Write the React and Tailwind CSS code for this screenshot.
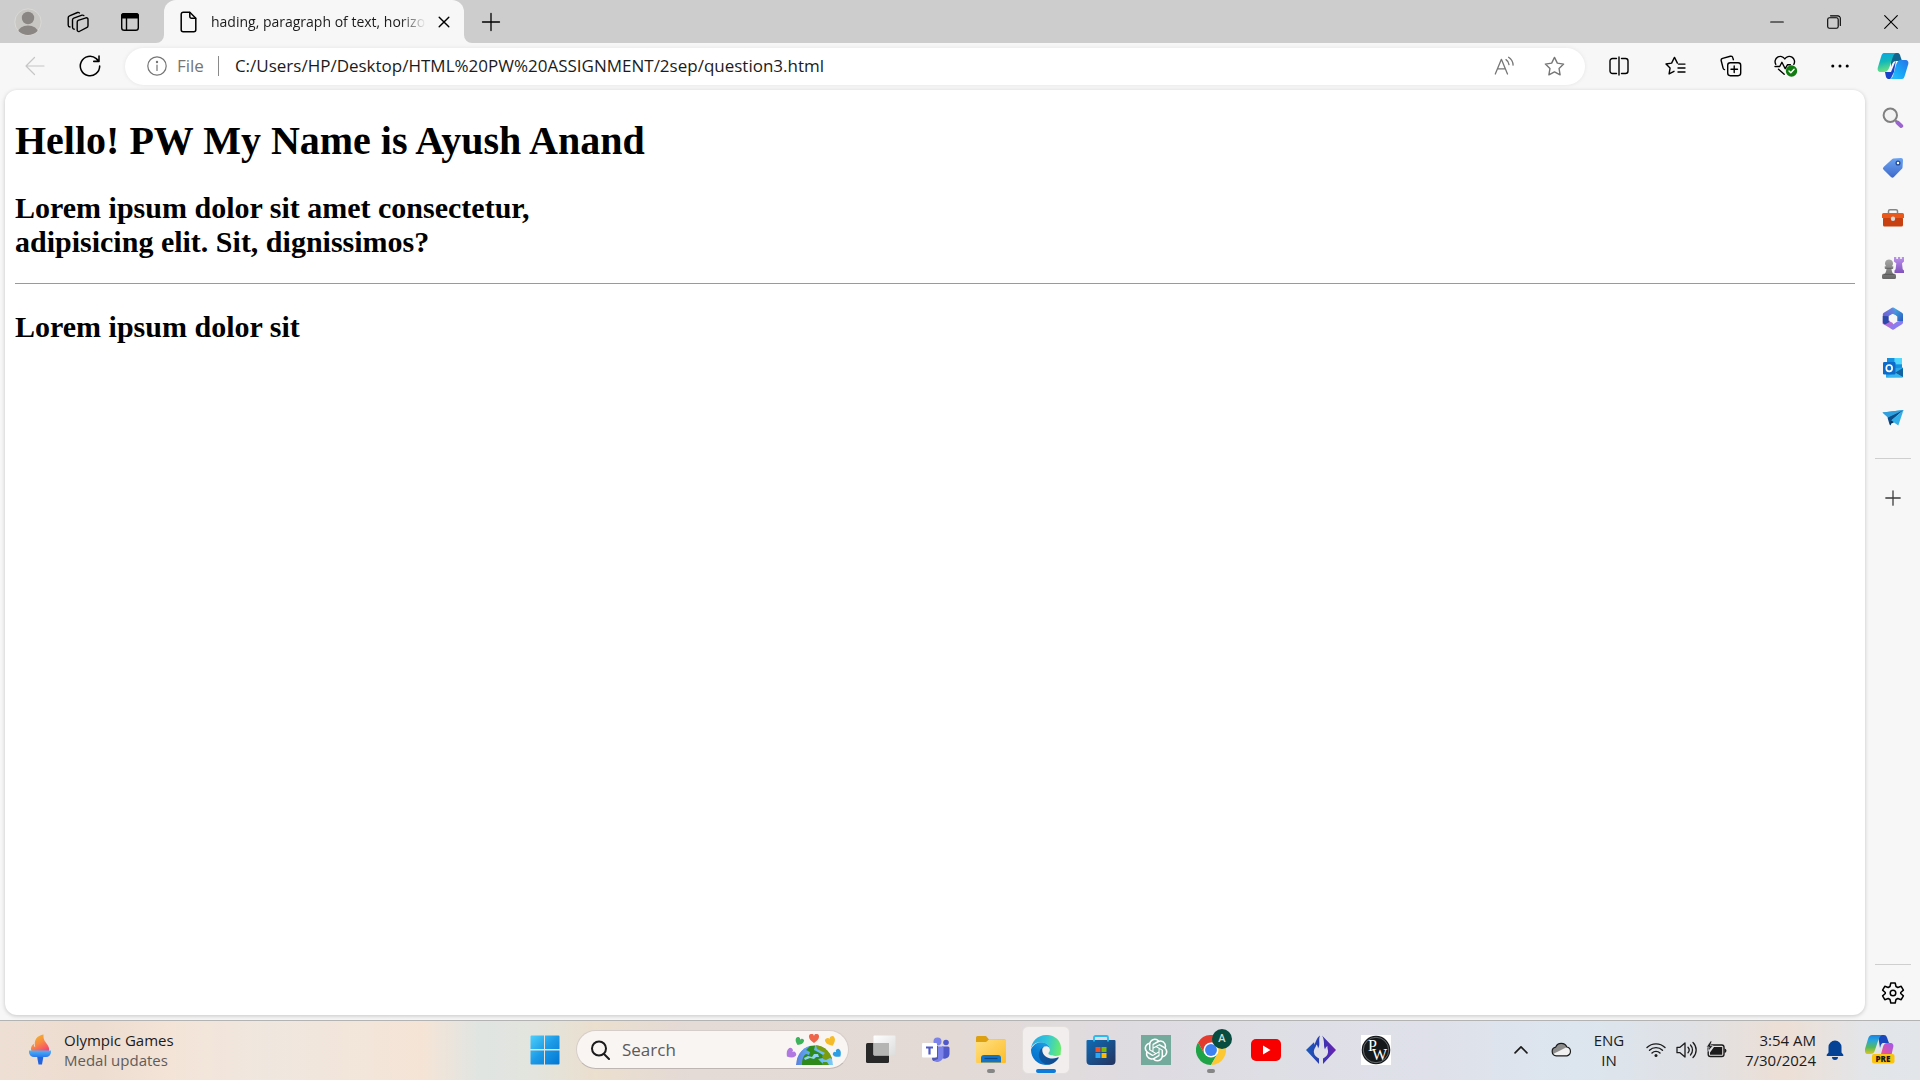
import React from 'react';

const line = { fill: 'none', stroke: 'currentColor', strokeLinecap: 'round', strokeLinejoin: 'round' };

function Icon({ size = 20, w = 1.3, className = '', children }) {
  return (
    <svg width={size} height={size} viewBox="0 0 20 20" {...line} strokeWidth={w} className={className} aria-hidden="true">
      {children}
    </svg>
  );
}

function IconButton({ label, className = '', children }) {
  return (
    <button type="button" aria-label={label} className={`flex shrink-0 items-center justify-center ${className}`}>
      {children}
    </button>
  );
}

/* ---------- Browser chrome icons ---------- */

const Avatar = () => (
  <svg width="28" height="28" viewBox="0 0 28 28" aria-hidden="true">
    <defs><clipPath id="av"><circle cx="14" cy="14" r="13" /></clipPath></defs>
    <circle cx="14" cy="14" r="13.2" fill="#c9c7c4" stroke="#dbd9d6" />
    <g clipPath="url(#av)" fill="#8a8683">
      <circle cx="14" cy="10" r="6.2" />
      <ellipse cx="14" cy="24.5" rx="10" ry="7" />
    </g>
  </svg>
);

const Workspaces = () => (
  <svg width="22" height="22" viewBox="0 0 22 22" {...line} strokeWidth="1.4" aria-hidden="true">
    <path d="M11.2 9.4 19 6.8a1.6 1.6 0 0 1 2 1.6v6.4a2 2 0 0 1-1.4 1.9l-7.4 3.8a1.5 1.5 0 0 1-2-1.5v-7.8a2 2 0 0 1 1-1.8Z" />
    <path d="M7.2 18.2a2 2 0 0 1-1.7-2V9a2 2 0 0 1 1.3-1.9l8.2-2.9a1.9 1.9 0 0 1 1.8.4" />
    <path d="M3 16a2 2 0 0 1-1.8-2V6.700a2 2 0 0 1 1.300-1.9L10.500 1.500a1.9 1.9 0 0 1 1.900.400" />
  </svg>
);

const TabActions = () => (
  <svg width="20" height="20" viewBox="0 0 20 20" aria-hidden="true">
    <rect x="1.700" y="1.700" width="16.600" height="16.600" rx="2.600" fill="none" stroke="#000" strokeWidth="1.400" />
    <path d="M1 6.500V4a3 3 0 0 1 3-3h12a3 3 0 0 1 3 3v2.500Z" fill="#000" />
    <path d="M6.500 6v12" stroke="#000" strokeWidth="1.400" />
  </svg>
);

const FileIcon = () => (
  <svg width="17" height="22" viewBox="0 0 17 22" {...line} strokeWidth="1.500" className="shrink-0" aria-hidden="true">
    <path d="M3.200 1.200h6.600l6 6v11.600a2 2 0 0 1-2 2H3.200a2 2 0 0 1-2-2V3.200a2 2 0 0 1 2-2Z" />
    <path d="M9.800 1.400v4.200a1.600 1.600 0 0 0 1.600 1.600h4.200" />
  </svg>
);

const ReadAloud = () => (
  <svg width="21" height="20" viewBox="0 0 21 20" {...line} strokeWidth="1.300" aria-hidden="true">
    <path d="M1.300 18 7.400 3.300 13.500 18M3.500 12.800h7.900M12 3.600c1.800 1.200 2.800 2.900 3 5M14.600 1.300c2.800 1.800 4.300 4.400 4.500 7.800" />
  </svg>
);

const starPath = 'M10 1.300l2.700 5.500 6 .900-4.350 4.250 1 6L10 15.100l-5.350 2.850 1-6L1.300 7.700l6-.900Z';

const Favorites = () => (
  <svg width="21" height="20" viewBox="0 0 21 20" {...line} strokeWidth="1.400" aria-hidden="true">
    <path d="m9 15.300-4.900 2.600.950-5.800L1 8l5.600-.850L9.500 1.400l2.900 5.700M13.500 8.100H20M13 12h7M13 16h7" />
  </svg>
);

const Collections = () => (
  <svg width="22" height="22" viewBox="0 0 22 22" {...line} strokeWidth="1.400" aria-hidden="true">
    <rect x="7.700" y="7.700" width="13" height="13" rx="2.600" />
    <path d="M14.200 11v6.500M11 14.200h6.500M4.500 14.600a2 2 0 0 1-1.400-1.500L1.200 5.800a2 2 0 0 1 1.400-2.400l7.700-2.100a2 2 0 0 1 2.500 1.400l.600 2" />
  </svg>
);

const Essentials = () => (
  <svg width="24" height="23" viewBox="0 0 24 23" {...line} strokeWidth="1.400" aria-hidden="true">
    <path d="M1.800 9.300A5 5 0 0 1 10.800 4a5 5 0 0 1 9 5.300M1 11.500h4.700l2.200-4.200 3.300 6.400 2.400-4h2.800M4.500 14.300l5.700 5" />
    <circle cx="17.500" cy="16" r="5.700" fill="#107c10" stroke="none" />
    <path d="m15 16 1.800 1.800 3.300-3.600" stroke="#fff" />
  </svg>
);

const Copilot = () => (
  <svg width="32" height="28" viewBox="0 0 32 28" aria-hidden="true">
    <defs>
      <linearGradient id="cpA" x1="0" y1="0" x2="0.200" y2="1"><stop stopColor="#0aa5e6" /><stop offset=".5" stopColor="#12b8b8" /><stop offset="1" stopColor="#6ae081" /></linearGradient>
      <linearGradient id="cpB" x1="1" y1="0" x2="0" y2="1"><stop stopColor="#2a72e8" /><stop offset=".5" stopColor="#18a2f5" /><stop offset="1" stopColor="#28c3fb" /></linearGradient>
    </defs>
    <path d="M14 1h6c3 0 3 2 4 5l1 3h-6c-3 0-4 3-5 6Z" fill="#12658f" />
    <path d="M8 20h6l5-12-2 12-2 4c-1 3-2 3-3 3-3 0-3-2-4-7Z" fill="#1742c9" />
    <path d="M7 1h12c-2 1-2.500 2-3.500 5l-3 9c-1.500 4-3 5-6 5H4c-3 0-4-2-3-5L4 5c1-3 1.500-4 3-4Z" fill="url(#cpA)" />
    <path d="M25 27H13c2-1 2.500-2 3.500-5l2.500-9c1.500-4 3-5 5-5h4c3 0 4 2 3 5l-3 10c-1 3-1.500 4-3 4Z" fill="url(#cpB)" />
  </svg>
);

/* ---------- Sidebar icons ---------- */

const SideSearch = () => (
  <svg width="22" height="22" viewBox="0 0 22 22" fill="none" aria-hidden="true">
    <path d="m13.500 13.500 2 2" stroke="#777" strokeWidth="2" />
    <circle cx="8.300" cy="8.300" r="6.700" fill="#f2f2f2" stroke="#808080" strokeWidth="2" />
    <path d="m15.500 15.500 3.700 3.500" stroke="#9a63cf" strokeWidth="4" strokeLinecap="round" />
  </svg>
);

const SideTag = () => (
  <svg width="22" height="22" viewBox="0 0 22 22" aria-hidden="true">
    <defs><linearGradient id="tg" x1="0" y1="0" x2="0" y2="1"><stop stopColor="#6aa4f2" /><stop offset="1" stopColor="#3f69cb" /></linearGradient></defs>
    <path d="M11.500 1.500 19 1a2 2 0 0 1 2 2l-.500 7.500a2 2 0 0 1-.6 1.300l-8 8.200a2 2 0 0 1-2.900 0l-7.400-7.200a2 2 0 0 1 0-2.900L10 2.200a2 2 0 0 1 1.500-.700Z" fill="url(#tg)" />
    <circle cx="16" cy="6" r="1.900" fill="#fff" stroke="#234a93" strokeWidth="1.300" />
  </svg>
);

const SideTools = () => (
  <svg width="22" height="20" viewBox="0 0 22 20" aria-hidden="true">
    <path d="M6.500 6V3.200a1.500 1.500 0 0 1 1.500-1.500h6a1.500 1.500 0 0 1 1.500 1.500V6" fill="none" stroke="#858585" strokeWidth="1.500" />
    <rect x="1" y="9" width="20" height="9.500" rx="1.500" fill="#c8400f" />
    <path d="M1.500 5h19a1.500 1.500 0 0 1 1.500 1.500V10H0V6.500A1.500 1.500 0 0 1 1.500 5Z" fill="#e8591b" />
    <circle cx="11" cy="10.700" r="2.200" fill="#d9d9d9" />
  </svg>
);

const SideGames = () => (
  <svg width="24" height="24" viewBox="0 0 24 24" aria-hidden="true">
    <defs>
      <linearGradient id="rk" x1="0" y1="0" x2="0" y2="1"><stop stopColor="#bd92ee" /><stop offset="1" stopColor="#8052bd" /></linearGradient>
      <linearGradient id="pn" x1="0" y1="0" x2="0" y2="1"><stop stopColor="#a6a6a6" /><stop offset="1" stopColor="#666" /></linearGradient>
    </defs>
    <path d="M13 1h2.300v2h1.600V1h2.300v2h1.600V1H23v4.500l-2 1.800.700 6 1.300 1.200V17h-9.500v-2.500l1.100-1.200.700-6L13 5.500Z" fill="url(#rk)" />
    <path d="M8 3.500a4 4 0 0 1 3 6.700h1.300v2.300h-1.800c.2 2.500.6 4 1.700 5.300h1.300a2 2 0 0 1 1.500 2.200v1.500a1.500 1.500 0 0 1-1.500 1.500h-11A1.500 1.500 0 0 1 1 21.500V20a2 2 0 0 1 1.500-2.200h1.300c1.100-1.300 1.500-2.800 1.700-5.300H3.700v-2.300H5a4 4 0 0 1 3-6.700Z" fill="url(#pn)" />
    <path d="M4 12.300h8M3 18.400h10" stroke="#555" strokeWidth=".8" />
  </svg>
);

const SideM365 = () => (
  <svg width="22" height="23" viewBox="0 0 22 23" aria-hidden="true">
    <defs>
      <linearGradient id="m1" x1="0" y1="1" x2="1" y2="0"><stop stopColor="#7651c9" /><stop offset="1" stopColor="#5f8fe6" /></linearGradient>
      <linearGradient id="m2" x1="0" y1="0" x2="1" y2="1"><stop stopColor="#49c7ee" /><stop offset="1" stopColor="#2b52be" /></linearGradient>
    </defs>
    <path d="M10 .8c.7-.3 1.300-.3 2 0l8 4.900a2 2 0 0 1 1 1.700v8.200L15.300 14V9.600L10 6.500 7 4Z" fill="url(#m2)" />
    <path d="m10 .8-8.200 5a2 2 0 0 0-1 1.800V15l5.700-1.500V9.300L13 5.500c0-2-.5-4-3-4.700Z" fill="url(#m1)" />
    <path d="M1 14.500 9 13l2 3.700 2.500 4.300-1.500 1.300a2 2 0 0 1-2 0l-8-4.800a2 2 0 0 1-1-3Z" fill="#b06fd8" />
    <path d="M21 14v1.600a2 2 0 0 1-1 1.700l-8 5c-2 .5-4-.8-4-2.800l7.300-5Z" fill="#8b7cf0" />
    <path d="M.8 14.500V9l5.700.3v4.200l1 1.500-4.500 2.500c-1.300-.5-2.200-1.500-2.200-3Z" fill="#2a49a8" />
    <circle cx="11" cy="11.500" r="4" fill="#f7f7f7" />
  </svg>
);

const SideOutlook = () => (
  <svg width="22" height="22" viewBox="0 0 22 22" aria-hidden="true">
    <rect x="5" y="1" width="15" height="14" rx="1" fill="#28a8ea" />
    <path d="M5 1h7.500v7H5ZM12.500 8H20v5h-7.500Z" fill="#1490df" />
    <path d="M12.500 1H20v6h-7.500Z" fill="#50d9ff" />
    <path d="M4 20.500V12l17-1.500v9a1 1 0 0 1-1 1Z" fill="#28a8ea" />
    <path d="m21 11-8 4.700 8 4.300Z" fill="#14629f" />
    <path d="m4 20.500 17-.300-8-4.700Z" fill="#38b7ee" />
    <rect x="1" y="5" width="12.500" height="12.500" rx="1.200" fill="#0b6ccb" />
    <ellipse cx="7.200" cy="11.200" rx="2.900" ry="3.200" fill="none" stroke="#fff" strokeWidth="1.700" />
  </svg>
);

const SideDrop = () => (
  <svg width="22" height="18" viewBox="0 0 22 18" aria-hidden="true">
    <path d="M.5 3.500 21.500 1 9 10.500Z" fill="#1ca0e0" />
    <path d="M5.500 8.500 21.500 1 9 12v4.500l-1.500-1Z" fill="#0d4c86" />
    <path d="M9.200 11.500 21.500 1l-5.200 15.500Z" fill="#31afe9" />
    <path d="m8 15.300 1.200-4 2.800 2Z" fill="#062e59" />
    <path d="M.5 3.500 21.500 1 5.800 8.500Z" fill="#2f9fdd" />
  </svg>
);

const Gear = () => (
  <svg width="24" height="24" viewBox="0 0 24 24" {...line} strokeWidth="1.500" aria-hidden="true">
    <circle cx="12" cy="12" r="2.800" />
    <path d="M9.800 2h4.400l.8 3.500 1.800 1 3.400-1.200 2.200 3.800-2.700 2.400v1l2.700 2.400-2.200 3.800-3.400-1.200-1.800 1-.8 3.500H9.800L9 18.500l-1.800-1-3.400 1.200-2.200-3.800 2.700-2.400v-1L1.600 9.100l2.200-3.800 3.400 1.200 1.800-1Z" />
  </svg>
);

/* ---------- Taskbar icons ---------- */

const Torch = () => (
  <svg width="22" height="31" viewBox="0 0 22 31" aria-hidden="true">
    <defs>
      <linearGradient id="fl" x1=".2" y1="0" x2=".8" y2="1"><stop stopColor="#f1b825" /><stop offset=".5" stopColor="#f88945" /><stop offset="1" stopColor="#f54273" /></linearGradient>
      <linearGradient id="bw" x1="0" y1="0" x2="0" y2="1"><stop stopColor="#50b4f8" /><stop offset="1" stopColor="#2878ed" /></linearGradient>
    </defs>
    <path d="M14.500.5c-.2 4 .5 5.500 3 9s3 5 2.500 7.500H2.500C1 14 3 11 5 9.800c-.5 2 .2 3 1.200 3.200C4.500 6 8 1.500 14.500.5Z" fill="url(#fl)" />
    <path d="M8 22h6.500L13 30.500H9.500Z" fill="#2363de" />
    <path d="M0 16.500h22v1.800a5 5 0 0 1-5 4.700H5a5 5 0 0 1-5-4.700Z" fill="url(#bw)" />
  </svg>
);

const Start = () => (
  <svg width="30" height="30" viewBox="0 0 30 30" aria-hidden="true">
    <defs><linearGradient id="wn" x1="0" y1="0" x2="30" y2="30" gradientUnits="userSpaceOnUse"><stop stopColor="#4ed1fc" /><stop offset=".5" stopColor="#1c99e6" /><stop offset="1" stopColor="#0075d2" /></linearGradient></defs>
    <path d="M1.500.5H14V14H.5V1.500a1 1 0 0 1 1-1ZM15 .5h13.500a1 1 0 0 1 1 1V14H15ZM.5 15.500H14v14H1.500a1 1 0 0 1-1-1ZM15 15.500h14.500v13a1 1 0 0 1-1 1H15Z" fill="url(#wn)" />
  </svg>
);

const Heart = ({ x, y, r, fill }) => (
  <path transform={`translate(${x} ${y}) rotate(${r})`} d="M0 4C-3.500 1.800-5-.2-5-2.200A2.500 2.500 0 0 1 0-3a2.500 2.500 0 0 1 5 .800C5-.2 3.500 1.800 0 4Z" fill={fill} />
);

const SmallHeart = ({ x, y, r, fill }) => (
  <path transform={`translate(${x} ${y}) rotate(${r}) scale(.85)`} d="M0 4C-3.500 1.800-5-.2-5-2.200A2.500 2.500 0 0 1 0-3a2.500 2.500 0 0 1 5 .800C5-.2 3.500 1.800 0 4Z" fill={fill} />
);

const Globe = () => (
  <svg width="58" height="32" viewBox="0 0 58 32" aria-hidden="true">
    <defs>
      <clipPath id="gb"><path d="M11 31a18.500 20 0 0 1 37 0Z" /></clipPath>
      <linearGradient id="oc"><stop stopColor="#5b7fdc" /><stop offset=".4" stopColor="#61b3f7" /><stop offset="1" stopColor="#78c9f6" /></linearGradient>
    </defs>
    <g clipPath="url(#gb)">
      <path d="M11 31a18.500 20 0 0 1 37 0Z" fill="url(#oc)" />
      <path d="M17 31c0-5 1-9 4-11l3 1 1-3-4-2 4-4 5 0-1 4 4 2 5 3 0 3-5 1 3 3 3 3H17Z" fill="#2f8a1c" />
      <path d="M31 11h9l9 9 0 6-4-2-4 2-3-1-1-3 3-3-4-2-4-2Z" fill="#7a9c0d" />
      <path d="M37 31l1-3 4 0 2 3Z" fill="#4c951a" />
      <path d="M19 24l4-2 4 1 2-3 4 0 1 3-3 0-2 2-4-1-5 2Z" fill="#8fd2f5" />
    </g>
    <Heart x="29" y="5" r="0" fill="#ee654a" />
    <SmallHeart x="14" y="8" r="25" fill="#3fb25c" />
    <Heart x="46" y="8" r="-25" fill="#f5bb28" />
    <Heart x="5" y="20" r="50" fill="#b078e0" />
    <SmallHeart x="53" y="20" r="-45" fill="#2b9ee4" />
  </svg>
);

const TaskView = () => (
  <svg width="30" height="29" viewBox="0 0 30 29" aria-hidden="true">
    <defs><linearGradient id="tv" x1="0" y1="0" x2="1" y2="1"><stop stopColor="#fff" /><stop offset="1" stopColor="#dcdcdc" /></linearGradient></defs>
    <rect x="0" y="8" width="23" height="20" rx="1.500" fill="#282828" />
    <rect x="7.500" y=".5" width="22" height="20" rx="1" fill="url(#tv)" />
    <path d="M7.500 8H23v12.500H8.500a1 1 0 0 1-1-1Z" fill="#b5b5b3" />
  </svg>
);

const Teams = () => (
  <svg width="28" height="26" viewBox="0 0 28 26" aria-hidden="true">
    <circle cx="15.500" cy="4.500" r="4" fill="#7b83eb" />
    <circle cx="24" cy="5.500" r="2.800" fill="#5059c9" />
    <path d="M20 9.500h6a1.500 1.500 0 0 1 1.500 1.500v6a5 5 0 0 1-7.500 4Z" fill="#5059c9" />
    <path d="M11 9.500h10.500v8.500a6.500 6.500 0 0 1-11.500 4.500Z" fill="#7b83eb" />
    <path d="M13 9v12H10l1 3 5-2V9Z" fill="#5158ae" />
    <rect x="0" y="6" width="15" height="14.500" rx="1" fill="#fff" />
    <path d="M4 9.500h7v2H8.600V17.500H6.400v-6H4Z" fill="#5059c9" />
  </svg>
);

const Explorer = () => (
  <svg width="30" height="27" viewBox="0 0 30 27" aria-hidden="true">
    <defs><linearGradient id="fd" x1="0" y1="0" x2="1" y2="1"><stop stopColor="#ffe083" /><stop offset="1" stopColor="#fdbd27" /></linearGradient></defs>
    <path d="M0 7V1.500A1.500 1.500 0 0 1 1.500 0H10l3 3.500h15.500A1.500 1.500 0 0 1 30 5v5H0Z" fill="#dda010" />
    <path d="M0 6h10l3-2.500h16a1 1 0 0 1 1 1v21.500a1 1 0 0 1-1 1H1a1 1 0 0 1-1-1Z" fill="url(#fd)" />
    <path d="M5 26.500V22a3 3 0 0 1 3-3h14a3 3 0 0 1 3 3v4.500Z" fill="#1274c8" />
    <path d="M8.500 22.500h13" stroke="#08498b" strokeWidth="1.200" />
  </svg>
);

const Edge = () => (
  <svg width="30" height="30" viewBox="0 0 256 256" aria-hidden="true">
    <defs>
      <linearGradient id="e1" x1="63" y1="178" x2="241" y2="178" gradientUnits="userSpaceOnUse"><stop stopColor="#0c59a4" /><stop offset="1" stopColor="#114a8b" /></linearGradient>
      <linearGradient id="e2" x1="150" y1="90" x2="50" y2="240" gradientUnits="userSpaceOnUse"><stop stopColor="#1b9de2" /><stop offset=".5" stopColor="#0b80d6" /><stop offset="1" stopColor="#0570cc" /></linearGradient>
      <linearGradient id="e3" x1="0" y1="60" x2="250" y2="110" gradientUnits="userSpaceOnUse"><stop stopColor="#27a7e0" /><stop offset=".5" stopColor="#31c6da" /><stop offset="1" stopColor="#66eb6e" /></linearGradient>
    </defs>
    <path fill="url(#e1)" d="M231 190c-3 2-7 3-10 5a101 101 0 0 1-36 6c-47 0-89-32-89-74 0-11 7-22 17-28-43 2-54 47-54 73 0 74 69 82 83 82 8 0 20-2 27-5h1a128 128 0 0 0 66-53c2-4-2-8-5-6Z" />
    <path fill="url(#e2)" d="M106 241a79 79 0 0 1-23-21 81 81 0 0 1 29-121c4-2 10-4 17-4a36 36 0 0 1 34 29C160 57 80 52 44 73 15 90 0 120 0 127c-1 66 52 129 128 129 9 0 17-1 24-3-17 0-33-4-46-12Z" />
    <path fill="url(#e3)" d="M152 149c-1 1-3 4-3 8 0 4 2 7 6 10 19 14 56 12 57 12 14 0 28-4 41-11 0-23 3-39 3-52 1-31-11-52-16-61C217 16 173 0 128 0 58 0 1 56 0 126c0-36 36-65 80-65 4 0 24 0 43 10 16 8 25 19 31 29 6 11 7 24 7 30 0 5-3 13-9 19Z" />
  </svg>
);

const Store = () => (
  <svg width="30" height="30" viewBox="0 0 30 30" aria-hidden="true">
    <defs><linearGradient id="st" x1="0" y1="0" x2="1" y2="1"><stop stopColor="#0f6cb5" /><stop offset="1" stopColor="#24335e" /></linearGradient></defs>
    <path d="M1.500 5h27a1 1 0 0 1 1 1v20a4 4 0 0 1-4 4h-21a4 4 0 0 1-4-4V6a1 1 0 0 1 1-1Z" fill="url(#st)" />
    <path d="M8 6.500V2.500A1.500 1.500 0 0 1 9.500 1h11A1.500 1.500 0 0 1 22 2.500v4" fill="none" stroke="#2abaf0" strokeWidth="1.800" />
    <path d="M9.500 12h5v5h-5Z" fill="#f25022" /><path d="M15.500 12h5v5h-5Z" fill="#7fba00" /><path d="M9.500 18h5v5h-5Z" fill="#29a9f5" /><path d="M15.500 18h5v5h-5Z" fill="#ffb900" />
  </svg>
);

const Gpt = () => (
  <svg width="30" height="30" viewBox="0 0 30 30" aria-hidden="true">
    <path d="M0 0h30v30H0Z" fill="#74aa9c" />
    <g transform="translate(3.500 3.500) scale(.96)" fill="#fff">
      <path d="M22.282 9.821a5.985 5.985 0 0 0-.516-4.910 6.046 6.046 0 0 0-6.510-2.900A6.065 6.065 0 0 0 4.981 4.180a5.985 5.985 0 0 0-3.998 2.900 6.046 6.046 0 0 0 .743 7.097 5.980 5.980 0 0 0 .510 4.911 6.051 6.051 0 0 0 6.515 2.900A5.985 5.985 0 0 0 13.260 24a6.056 6.056 0 0 0 5.772-4.206 5.990 5.990 0 0 0 3.997-2.900 6.056 6.056 0 0 0-.747-7.073zM13.260 22.430a4.476 4.476 0 0 1-2.876-1.040l.141-.081 4.779-2.758a.795.795 0 0 0 .392-.681v-6.737l2.020 1.168a.071.071 0 0 1 .038.052v5.583a4.504 4.504 0 0 1-4.494 4.494zM3.600 18.304a4.470 4.470 0 0 1-.535-3.014l.142.085 4.783 2.759a.771.771 0 0 0 .780 0l5.843-3.369v2.332a.080.080 0 0 1-.033.062L9.740 19.950a4.500 4.500 0 0 1-6.140-1.646zM2.340 7.896a4.485 4.485 0 0 1 2.366-1.973V11.600a.766.766 0 0 0 .388.676l5.815 3.355-2.020 1.168a.076.076 0 0 1-.071 0l-4.830-2.786A4.504 4.504 0 0 1 2.340 7.872zm16.597 3.855l-5.833-3.387L15.119 7.200a.076.076 0 0 1 .071 0l4.830 2.791a4.494 4.494 0 0 1-.676 8.105v-5.678a.790.790 0 0 0-.407-.667zm2.010-3.023l-.141-.085-4.774-2.782a.776.776 0 0 0-.785 0L9.409 9.230V6.897a.066.066 0 0 1 .028-.061l4.830-2.787a4.500 4.500 0 0 1 6.680 4.660zm-12.640 4.135l-2.020-1.164a.080.080 0 0 1-.038-.057V6.075a4.500 4.500 0 0 1 7.375-3.453l-.142.080L8.704 5.460a.795.795 0 0 0-.393.681zm1.097-2.365l2.602-1.500 2.607 1.500v2.999l-2.597 1.500-2.607-1.500z" />
    </g>
  </svg>
);

const Chrome = () => (
  <svg width="30" height="30" viewBox="0 0 48 48" aria-hidden="true">
    <path d="M3.200 12a24 24 0 0 0 20.800 36l10.400-18L24 24l-10.400 6Z" fill="#1ea446" />
    <path d="M44.800 12A24 24 0 0 1 24 48l10.400-18L34.400 18 24 12Z" fill="#fcc934" />
    <path d="M3.200 12h.1L13.600 30 24 12h20.800A24 24 0 0 0 3.200 12Z" fill="#e33b2e" />
    <circle cx="24" cy="24" r="12" fill="#fff" />
    <circle cx="24" cy="24" r="9.500" fill="#3e82f1" />
  </svg>
);

const YouTube = () => (
  <svg width="30" height="22" viewBox="0 0 30 22" aria-hidden="true">
    <rect width="30" height="22" rx="5" fill="#f80000" />
    <path d="m12 6.500 7.500 4.500-7.500 4.500Z" fill="#fff" />
  </svg>
);

const CodeFlame = () => (
  <svg width="30" height="30" viewBox="0 0 30 30" aria-hidden="true">
    <defs><linearGradient id="cf" x1="0" y1="0" x2="30" y2="0" gradientUnits="userSpaceOnUse"><stop stopColor="#1a5cba" /><stop offset=".45" stopColor="#2b3cb0" /><stop offset="1" stopColor="#6d20b3" /></linearGradient></defs>
    <path d="M14 .5c-.6 1.500-.8 3-.8 4.500 0 3.500.8 5-1.200 8.500 0-2-.6-3-1.500-4-.6 3-3 4.500-2.600 8 .4 3.200 3 5 5.100 6v5.500L0 15l8-7.800c.3 1 .3 1.800.2 2.800C10 7 10.500 3 14 .5Z" fill="url(#cf)" />
    <path d="M16 .5 30 15 17 29v-5.500c2.200-1 4.600-2.800 5-6 .3-2.500-.8-4-.6-6.500-1.400 1-2 2-2.400 3.500C17.500 11.500 18.300 9 17.800 6c-.3-2-.8-4-1.800-5.500Z" fill="url(#cf)" />
  </svg>
);

const Pw = () => (
  <svg width="30" height="30" viewBox="0 0 30 30" aria-hidden="true">
    <path d="M0 0h30v30H0Z" fill="#fff" />
    <circle cx="15" cy="15" r="14.300" fill="#15191c" />
    <circle cx="15" cy="15" r="12.700" fill="none" stroke="#8a8d8f" strokeWidth=".7" />
    <text x="7" y="16" fontFamily="Liberation Serif, serif" fontSize="16" fill="#fff">P<tspan x="11" y="25">W</tspan></text>
  </svg>
);

const Cloud = () => (
  <svg width="21" height="15" viewBox="0 0 21 15" aria-hidden="true">
    <path d="M5.300 13.800a4.400 4.400 0 0 1-.600-8.700A6 6 0 0 1 15.800 5a4.500 4.500 0 0 1 .200 8.800Z" fill="#f1f1f1" />
    <path d="M2 12 13 6.500l3-1.500A6 6 0 0 0 4.700 5.100 4.400 4.400 0 0 0 2 12Z" fill="#8c8c8c" />
    <path d="M5.300 13.800a4.400 4.400 0 0 1-.600-8.700A6 6 0 0 1 15.800 5a4.500 4.500 0 0 1 .200 8.800Z" fill="none" stroke="#1b1b1b" strokeWidth="1.200" />
  </svg>
);

const Wifi = () => (
  <svg width="20" height="16" viewBox="0 0 20 16" {...line} strokeWidth="1.400" aria-hidden="true">
    <path d="M1 5.500a13 13 0 0 1 18 0M3.500 8.300a9.300 9.300 0 0 1 13 0M6 11a5.800 5.800 0 0 1 8 0" />
    <circle cx="10" cy="13.500" r="1.500" fill="currentColor" stroke="none" />
  </svg>
);

const Speaker = () => (
  <svg width="21" height="18" viewBox="0 0 21 18" {...line} strokeWidth="1.300" aria-hidden="true">
    <path d="M1 6.300h3L9 2v14l-5-4.300H1ZM12 6.300a4 4 0 0 1 0 5.400M14.500 4a7.300 7.300 0 0 1 0 10M17 1.500a10.500 10.500 0 0 1 0 15" />
  </svg>
);

const Battery = () => (
  <svg width="21" height="17" viewBox="0 0 21 17" aria-hidden="true">
    <rect x="2.200" y="4" width="15.800" height="11.500" rx="2.200" fill="none" stroke="#1b1b1b" strokeWidth="1.400" />
    <path d="M18.500 7.500v4.500a2.300 2.300 0 0 0 2-2.200 2.300 2.300 0 0 0-2-2.300ZM8 6h8.200v7.700H4V11.500Z" fill="#1b1b1b" />
    <path d="M4.500 0 .5 6h2.700L2 10.500 7 4.700H4.300L6 0Z" fill="#1b1b1b" stroke="#e6e9ec" strokeWidth=".6" />
  </svg>
);

const Bell = () => (
  <svg width="18" height="20" viewBox="0 0 18 20" fill="#054296" aria-hidden="true">
    <path d="M9 .5a6.500 6.500 0 0 1 6.500 6.500v5.500l1.800 2.200a.8.800 0 0 1-.6 1.300H1.300a.8.800 0 0 1-.6-1.300l1.800-2.200V7A6.500 6.500 0 0 1 9 .5ZM6 17h6a3 3 0 0 1-6 0Z" />
  </svg>
);

const CopilotPre = () => (
  <svg width="30" height="29" viewBox="0 0 30 29" aria-hidden="true">
    <defs>
      <linearGradient id="pa" x1="0" y1="0" x2="0" y2="1"><stop stopColor="#1684e5" /><stop offset=".3" stopColor="#2aa6d9" /><stop offset=".65" stopColor="#55b95c" /><stop offset="1" stopColor="#e0c51e" /></linearGradient>
      <linearGradient id="pb" x1="1" y1="0" x2="0" y2="1"><stop stopColor="#9b5bf0" /><stop offset=".5" stopColor="#e052a9" /><stop offset="1" stopColor="#fb7b5d" /></linearGradient>
    </defs>
    <path d="M13 0h6c3 0 3 3 5 8h-5c-3 0-3 2-4 5Z" fill="#1948bd" />
    <path d="M7 0h10c-2 1-3 3-4 6l-3 9c-1 3-2 4-5 4H3c-3 0-3-2-3-5L3 4c1-3 2-4 4-4Z" fill="url(#pa)" />
    <path d="M25 26H12c2-1 3-3 4-7l2-7c1-3 2-4 4-4h3c3 0 4 2 3 5l-2 9Z" fill="url(#pb)" />
    <rect x="7" y="19" width="22.500" height="9.500" rx="2" fill="#fbc40f" />
    <text x="18" y="26.500" textAnchor="middle" fontFamily="Open Sans, sans-serif" fontWeight="800" fontSize="8" fill="#1a1a1a">PRE</text>
  </svg>
);

/* ---------- Layout ---------- */

function TitleBar() {
  return (
    <header className="flex h-[43px] shrink-0 bg-[#cdcdcd]">
      <IconButton label="Profile" className="ml-2 w-10"><Avatar /></IconButton>
      <IconButton label="Workspaces" className="ml-2 w-11"><Workspaces /></IconButton>
      <IconButton label="Tab actions" className="ml-2 w-11"><TabActions /></IconButton>
      <div className="relative ml-3 flex w-[300px] items-center rounded-t-xl bg-[#f7f7f7] pl-4 pr-2.5">
        <svg className="absolute -left-2 bottom-0" width="8" height="8" aria-hidden="true"><path d="M8 0v8H0a8 8 0 0 0 8-8Z" fill="#f7f7f7" /></svg>
        <svg className="absolute -right-2 bottom-0" width="8" height="8" aria-hidden="true"><path d="M0 0v8h8a8 8 0 0 1-8-8Z" fill="#f7f7f7" /></svg>
        <FileIcon />
        <span className="ml-3.5 flex-1 overflow-hidden whitespace-nowrap text-sm text-[#1b1b1b] [mask-image:linear-gradient(to_right,black_88%,transparent)]">
          hading, paragraph of text, horizo
        </span>
        <IconButton label="Close tab" className="ml-2 size-5"><Icon size={16} w={1.8}><path d="m4 4 12 12M16 4 4 16" /></Icon></IconButton>
      </div>
      <IconButton label="New tab" className="ml-2 w-[38px]"><Icon size={20} w={1.3}><path d="M10 1.500v17M1.500 10h17" /></Icon></IconButton>
      <div className="ml-auto flex">
        <IconButton label="Minimize" className="w-[57px]"><Icon size={14} w={1.6}><path d="M1 10h18" /></Icon></IconButton>
        <IconButton label="Restore" className="w-[57px]"><Icon size={14} w={1.6}><rect x="1" y="4" width="15" height="15" rx="2.500" /><path d="M5 1.200h10.500A3.500 3.500 0 0 1 19 4.700V15" /></Icon></IconButton>
        <IconButton label="Close" className="w-[58px]"><Icon size={14} w={1.6}><path d="m1 1 18 18M19 1 1 19" /></Icon></IconButton>
      </div>
    </header>
  );
}

function Toolbar() {
  return (
    <div className="flex h-[46px] shrink-0 items-center">
      <IconButton label="Back" className="ml-3 w-[46px] text-[#c6c6c6]"><Icon w={1.2}><path d="M19 10H1.200M9.500 1.500 1 10l8.500 8.500" /></Icon></IconButton>
      <IconButton label="Refresh" className="ml-2 w-12"><Icon size={22} w={1.4}><path d="M18.800 10A8.800 8.800 0 1 1 15.700 3.300L18 5.600M18.200 1v4.800h-4.800" /></Icon></IconButton>
      <div className="ml-[11px] flex h-[37px] flex-1 items-center rounded-full bg-white pl-[22px] shadow-[0_0_4px_rgba(0,0,0,0.08)]">
        <button type="button" className="flex items-center gap-2.5 text-[17px] text-[#757575]">
          <Icon size={20} w={1.2}><circle cx="10" cy="10" r="9.200" /><path d="M10 9v5.500" /><circle cx="10" cy="6" r=".6" fill="currentColor" /></Icon>
          File
        </button>
        <span className="ml-3.5 h-5 w-px bg-[#8a8a8a]" />
        <input aria-label="Address" className="ml-4 min-w-0 flex-1 bg-transparent text-[17px] text-[#1b1b1b] outline-none" defaultValue="C:/Users/HP/Desktop/HTML%20PW%20ASSIGNMENT/2sep/question3.html" />
        <IconButton label="Read aloud" className="w-[50px] text-[#767676]"><ReadAloud /></IconButton>
        <IconButton label="Add to favorites" className="mr-1.5 w-[50px] text-[#767676]"><Icon size={21} w={1.3}><path d={starPath} /></Icon></IconButton>
      </div>
      <div className="ml-1.5 flex">
        <IconButton label="Split screen" className="w-14"><Icon size={20} w={1.4}><path d="M7.500 17.500h-4a2.500 2.500 0 0 1-2.500-2.500V5a2.500 2.500 0 0 1 2.500-2.500h4M12.500 2.500h4A2.500 2.500 0 0 1 19 5v10a2.500 2.500 0 0 1-2.500 2.500h-4M10 1v18" /></Icon></IconButton>
        <IconButton label="Favorites" className="w-14"><Favorites /></IconButton>
        <IconButton label="Collections" className="w-[55px]"><Collections /></IconButton>
        <IconButton label="Browser essentials" className="w-14"><Essentials /></IconButton>
        <IconButton label="Settings and more" className="w-[51px]"><Icon size={18} w={0}><g fill="#000"><circle cx="2" cy="10" r="1.700" /><circle cx="10" cy="10" r="1.700" /><circle cx="18" cy="10" r="1.700" /></g></Icon></IconButton>
      </div>
    </div>
  );
}

const sideItems = [
  ['Search', SideSearch], ['Shopping', SideTag], ['Tools', SideTools], ['Games', SideGames],
  ['Microsoft 365', SideM365], ['Outlook', SideOutlook], ['Drop', SideDrop],
];

function Sidebar() {
  return (
    <aside className="flex w-[55px] shrink-0 flex-col items-center">
      <IconButton label="Copilot" className="h-[46px] w-full"><Copilot /></IconButton>
      <nav className="mt-1 flex w-full flex-col">
        {sideItems.map(([name, Glyph]) => (
          <IconButton key={name} label={name} className="h-[50px] w-full"><Glyph /></IconButton>
        ))}
      </nav>
      <hr className="mt-[15px] w-9 border-[#cfcfcf]" />
      <IconButton label="Customize" className="mt-[15px] h-12 w-full text-[#3a3a3a]"><Icon size={16} w={1.6}><path d="M10 1v18M1 10h18" /></Icon></IconButton>
      <hr className="mt-auto w-9 border-[#cfcfcf]" />
      <IconButton label="Settings" className="h-[55px] w-full"><Gear /></IconButton>
    </aside>
  );
}

function Document() {
  return (
    <main className="mb-[5px] ml-[5px] mt-px flex-1 rounded-xl bg-white px-2.5 font-['Liberation_Serif',serif] text-black shadow-[0_1px_4px_rgba(0,0,0,0.2)]">
      <h1 className="mt-7 text-[40px] font-bold leading-[45px]">Hello! PW My Name is Ayush Anand</h1>
      <h2 className="mt-7 text-3xl/[34px] font-bold">
        Lorem ipsum dolor sit amet consectetur,
        <br />
        adipisicing elit. Sit, dignissimos?
      </h2>
      <hr className="mt-6 border-[#9a9a9a]" />
      <h2 className="mt-[26px] text-3xl/[34px] font-bold">Lorem ipsum dolor sit</h2>
    </main>
  );
}

const Dot = () => <span className="absolute bottom-0.5 left-1/2 h-1 w-2 -translate-x-1/2 rounded-full bg-[#868686]" />;

function TaskButton({ label, children }) {
  return <IconButton label={label} className="relative h-[50px] w-[55px]">{children}</IconButton>;
}

function Taskbar() {
  return (
    <footer className="grid h-[60px] shrink-0 grid-cols-[1fr_auto_1fr] items-center border-t border-[#b3b3b3] bg-[linear-gradient(90deg,#eedfd4_0%,#eddcd0_5%,#f4e4d8_9%,#efe7df_14%,#f5e4d6_22%,#e0e5e2_25%,#e3e4dd_28%,#ebdfce_31%,#e4dad6_36%,#e3dad6_50%,#dedce2_60%,#dfe1ea_75%,#dce6ef_82%,#dfe1e5_88%,#eddfd5_93%,#e3e5e8_97%,#e2e6ea_100%)] pb-0.5 text-[#1b1b1b]">
      <button type="button" className="ml-[29px] flex items-center gap-[13px] justify-self-start text-left text-[15px]/5">
        <Torch />
        <span>Olympic Games<br /><span className="text-[#5f5c5a]">Medal updates</span></span>
      </button>
      <div className="flex items-center">
        <TaskButton label="Start"><Start /></TaskButton>
        <label className="mx-1 flex h-[39px] w-[273px] items-center rounded-full border border-[#d5cdc9] border-b-[#bdb6b3] bg-[#f8f5f3] pl-[13px] pr-[5px]">
          <Icon size={20} w={2}><circle cx="9" cy="8.500" r="7" /><path d="m14 14 5 5" /></Icon>
          <input aria-label="Search" placeholder="Search" className="ml-3 min-w-0 flex-1 bg-transparent text-[17px] outline-none placeholder:text-[#5c5a59]" />
          <Globe />
        </label>
        <TaskButton label="Task view"><TaskView /></TaskButton>
        <TaskButton label="Teams"><Teams /></TaskButton>
        <TaskButton label="File Explorer"><Explorer /><Dot /></TaskButton>
        <TaskButton label="Microsoft Edge">
          <span className="flex h-12 w-12 items-center justify-center rounded-md border border-[#e3dfdd] bg-[#f1eeed]"><Edge /></span>
          <span className="absolute bottom-0.5 left-1/2 h-1 w-5 -translate-x-1/2 rounded-full bg-[#0d7bd7]" />
        </TaskButton>
        <TaskButton label="Microsoft Store"><Store /></TaskButton>
        <TaskButton label="ChatGPT"><Gpt /></TaskButton>
        <TaskButton label="Google Chrome">
          <Chrome />
          <span className="absolute right-1.5 top-1 flex size-5 items-center justify-center rounded-full bg-[#084c40] text-[11px] font-semibold text-[#c5dfd8]">A</span>
          <Dot />
        </TaskButton>
        <TaskButton label="YouTube"><YouTube /></TaskButton>
        <TaskButton label="Code"><CodeFlame /></TaskButton>
        <TaskButton label="Physics Wallah"><Pw /></TaskButton>
      </div>
      <div className="mr-2.5 flex items-center justify-self-end text-[15px]/5">
        <IconButton label="Show hidden icons" className="h-10 w-10"><Icon size={14} w={2.4}><path d="m1.500 14 8.500-8.500 8.500 8.500" /></Icon></IconButton>
        <IconButton label="OneDrive" className="h-10 w-10"><Cloud /></IconButton>
        <button type="button" className="mr-1 w-14 text-center">ENG<br />IN</button>
        <button type="button" aria-label="Network, sound and battery" className="flex">
          <span className="flex w-[30px] items-center justify-center"><Wifi /></span>
          <span className="flex w-[30px] items-center justify-center"><Speaker /></span>
          <span className="flex w-[30px] items-center justify-center"><Battery /></span>
        </button>
        <button type="button" className="w-[89px] whitespace-nowrap pr-1 text-right">3:54 AM<br />7/30/2024</button>
        <IconButton label="Notifications" className="h-10 w-[30px]"><Bell /></IconButton>
        <IconButton label="Copilot preview" className="h-10 w-[60px]"><CopilotPre /></IconButton>
      </div>
    </footer>
  );
}

export default function App() {
  return (
    <div className="flex min-h-screen flex-col bg-[#f7f7f7] font-['Open_Sans','Noto_Sans',sans-serif]">
      <TitleBar />
      <div className="flex flex-1">
        <div className="flex min-w-0 flex-1 flex-col">
          <Toolbar />
          <Document />
        </div>
        <Sidebar />
      </div>
      <Taskbar />
    </div>
  );
}
